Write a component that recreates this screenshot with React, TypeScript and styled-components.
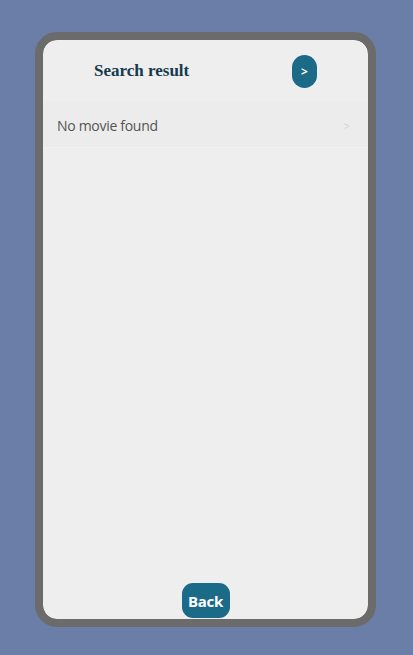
import React from 'react';
import styled, { createGlobalStyle } from 'styled-components';

const GlobalStyle = createGlobalStyle`
    html, body {
        margin: 0;
        padding: 0;
        background-color: #6a7ea8;
    }
    * {
        box-sizing: border-box;
    }
`;

const App: React.FC = () => {
    return (
        <>
            <GlobalStyle />
            <SPage>
                <SPhone>
                    <SScreen>
                        <SHeader>
                            <STitle>Search result</STitle>
                            <SNextButton>&gt;</SNextButton>
                        </SHeader>
                        <SRow>
                            <SRowText>No movie found</SRowText>
                            <SChevron>&gt;</SChevron>
                        </SRow>
                        <SSpacer />
                        <SBackButton>Back</SBackButton>
                    </SScreen>
                </SPhone>
            </SPage>
        </>
    );
};

export default App;

const SPage = styled.div`
    width: 413px;
    height: 655px;
    display: flex;
    padding: 32px 0 0 35px;
`;

const SPhone = styled.div`
    width: 341px;
    height: 595px;
    border: 8px solid #6b6b6b;
    border-radius: 22px;
    background-color: #6b6b6b;
    overflow: hidden;
`;

const SScreen = styled.div`
    height: 100%;
    display: flex;
    flex-direction: column;
    background-color: #eeeeee;
    border-radius: 14px;
    overflow: hidden;
`;

const SHeader = styled.div`
    display: flex;
    align-items: center;
    height: 62px;
    padding: 0 51px;
`;

const STitle = styled.div`
    font-family: 'Liberation Serif', 'Times New Roman', serif;
    font-weight: bold;
    font-size: 17px;
    color: #163a4d;
`;

const SNextButton = styled.button`
    margin-left: auto;
    width: 25px;
    height: 33px;
    padding: 0;
    border: none;
    border-radius: 13px;
    background-color: #1b6a87;
    color: #ffffff;
    font-family: 'Open Sans', 'Liberation Sans', sans-serif;
    font-weight: bold;
    font-size: 12px;
    display: flex;
    align-items: center;
    justify-content: center;
`;

const SRow = styled.div`
    display: flex;
    align-items: center;
    height: 46px;
    padding: 2px 18px 0 14px;
    background-color: #ececec;
    border-bottom: 1px solid #f1f1f1;
`;

const SRowText = styled.div`
    font-family: 'Open Sans', 'Liberation Sans', sans-serif;
    font-size: 14px;
    letter-spacing: -0.3px;
    color: #555555;
`;

const SChevron = styled.div`
    margin-left: auto;
    font-family: 'Open Sans', 'Liberation Sans', sans-serif;
    font-size: 11px;
    color: #d2d2d2;
`;

const SSpacer = styled.div`
    flex: 1;
`;

const SBackButton = styled.button`
    align-self: center;
    width: 48px;
    height: 35px;
    margin-bottom: 1px;
    padding: 0;
    border: none;
    border-radius: 11px;
    background-color: #1b6a87;
    color: #ffffff;
    font-family: 'Open Sans', 'Liberation Sans', sans-serif;
    font-weight: bold;
    font-size: 15px;
    letter-spacing: -0.3px;
`;
